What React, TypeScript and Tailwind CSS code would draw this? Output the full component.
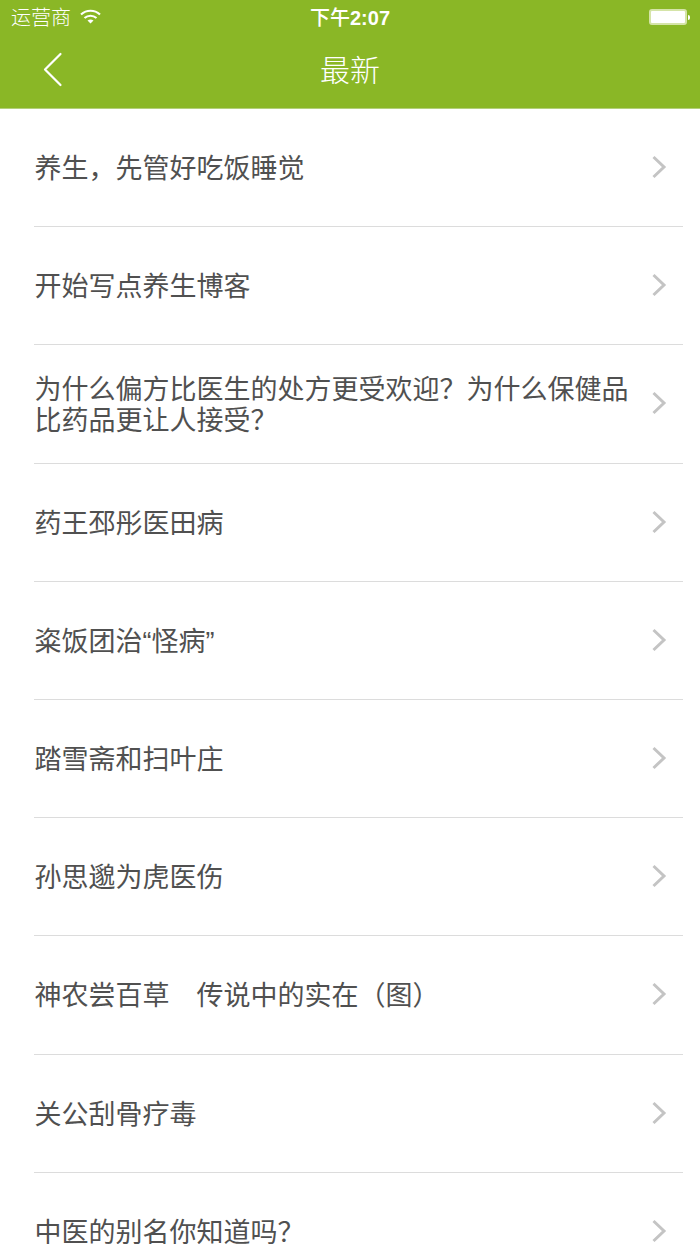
const items = [
  '养生，先管好吃饭睡觉',
  '开始写点养生博客',
  '为什么偏方比医生的处方更受欢迎？为什么保健品比药品更让人接受？',
  '药王邳彤医田病',
  '粢饭团治“怪病”',
  '踏雪斋和扫叶庄',
  '孙思邈为虎医伤',
  '神农尝百草　传说中的实在（图）',
  '关公刮骨疗毒',
  '中医的别名你知道吗？',
]

const cjk = "font-['Liberation_Sans','Noto_Sans_CJK_SC',sans-serif]"

function StatusBar() {
  return (
    <div className="h-9 relative flex items-center justify-between pl-[11px] pr-[10px] text-white">
      <div className="flex items-center gap-[9px]">
        <span className={`text-[20px] leading-none font-light ${cjk}`}>运营商</span>
        <svg width="21" height="15" viewBox="0 0 21 15" className="mb-[3px]">
          <path d="M1 5.5C6.5 0.5 14.5 0.5 20 5.5" fill="none" stroke="white" strokeWidth="2.2" />
          <path d="M4.5 9C8 6 13 6 16.5 9" fill="none" stroke="white" strokeWidth="2.2" />
          <path d="M7.5 11.5C9.5 10 11.5 10 13.5 11.5L10.5 14.5Z" fill="white" />
        </svg>
      </div>
      <span className={`absolute left-0 right-0 text-center text-[20px] leading-none font-medium ${cjk}`}>
        下午<span className="font-bold">2:07</span>
      </span>
      <div className="flex items-center gap-[1px] mb-[2px]">
        <div className="w-[38px] h-[16px] rounded-[3px] border-2 border-[#d5e4a8] bg-white" />
        <div className="w-[2px] h-[5px] bg-white rounded-r-sm" />
      </div>
    </div>
  )
}

function Header() {
  return (
    <div className="h-[73px] relative flex items-center justify-center bg-[#8ab726] border-b border-[#b3cf7a] text-white">
      <svg width="22" height="36" viewBox="0 0 22 36" className="absolute left-[42px] top-[16px]">
        <path d="M18.5 2L3 17.5L18.5 33" fill="none" stroke="white" strokeWidth="2.2" strokeLinecap="round" strokeLinejoin="round" />
      </svg>
      <span className={`text-[30px] leading-none font-light mb-[2px] ${cjk}`}>最新</span>
    </div>
  )
}

function Row({ title }: { title: string }) {
  return (
    <div className="h-[118.2px] shrink-0 ml-[34px] flex items-center border-b border-[#dcdcdc]">
      <p className={`flex-1 pr-[20px] pl-[0.6px] pt-[4px] text-[27px] leading-[31px] text-[#505050] font-normal ${cjk}`}>{title}</p>
      <svg width="16" height="24" viewBox="0 0 16 24" className="mr-[16px] mb-[1px]">
        <path d="M2.5 2L13 12L2.5 22" fill="none" stroke="#c4c4c4" strokeWidth="3" />
      </svg>
    </div>
  )
}

export default function App() {
  return (
    <div className="w-[700px] h-[1244px] overflow-hidden bg-white flex flex-col">
      <div className="bg-[#8ab726]">
        <StatusBar />
        <Header />
      </div>
      <div className="pr-[17px] flex flex-col">
        {items.map((t) => (
          <Row key={t} title={t} />
        ))}
      </div>
    </div>
  )
}
